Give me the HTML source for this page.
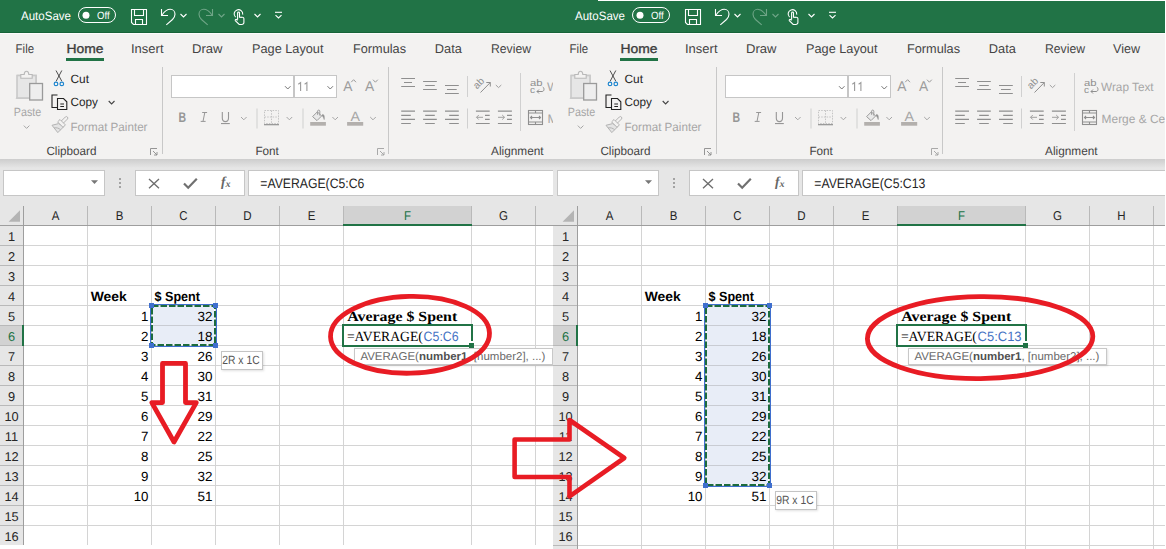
<!DOCTYPE html><html><head><meta charset="utf-8"><title>Excel AVERAGE</title><style>html,body{margin:0;padding:0;background:#fff;overflow:hidden;width:1166px;height:549px}svg{display:block}</style></head><body><svg width="1166" height="549" viewBox="0 0 1166 549" text-rendering="geometricPrecision"><defs><linearGradient id="shadow" x1="0" y1="0" x2="0" y2="1"><stop offset="0" stop-color="#cdcdcd"/><stop offset="1" stop-color="#e6e6e6"/></linearGradient><filter id="tipsh" x="-10%" y="-20%" width="130%" height="160%"><feDropShadow dx="1" dy="1" stdDeviation="0.8" flood-color="#000" flood-opacity="0.12"/></filter><clipPath id="clipL"><rect x="0" y="0" width="553" height="545"/></clipPath><clipPath id="clipR"><rect x="-1" y="1" width="612" height="548"/></clipPath></defs><rect x="0" y="0" width="1166" height="549" fill="#fff"/><g clip-path="url(#clipL)"><rect x="-1" y="0" width="554" height="33" fill="#217346"/><rect x="-1" y="32" width="554" height="1" fill="#176338"/><text x="21" y="19.8" font-family="'Liberation Sans', sans-serif" font-size="12.2" font-weight="400" fill="#fff" textLength="50" lengthAdjust="spacingAndGlyphs" >AutoSave</text><rect x="78.5" y="7.5" width="37" height="15" rx="7.5" fill="none" stroke="#fff" stroke-width="1"/><circle cx="86" cy="15.2" r="3.5" fill="#fff"/><text x="97" y="19" font-family="'Liberation Sans', sans-serif" font-size="10.5" font-weight="400" fill="#fff" textLength="12.6" lengthAdjust="spacingAndGlyphs" >Off</text><g fill="none" stroke="#fff" stroke-width="1.1"><path d="M131.5,9.5 H146.5 V24.5 H133.5 L131.5,22.5 Z"/><path d="M134.5,9.5 V15.5 H143.5 V9.5"/><path d="M135.5,24.5 V19.5 H142.5 V24.5"/></g><g fill="none" stroke="#fff" stroke-width="1.1"><path d="M161.5,9 V15.5 H168"/><path d="M162,15 C164.5,11.5 167.5,9.3 170.3,9.3 C173,9.3 175,11.5 175,14.3 C175,16.5 174,18 172.5,19.5 L166.3,24.8"/></g><path d="M180.5,14 L183.5,17 L186.5,14" fill="none" stroke="#fff" stroke-width="1.1"/><g fill="none" stroke="#6fa587" stroke-width="1.1"><path d="M212.5,9 V15.5 H206"/><path d="M212,15 C209.5,11.5 206.5,9.3 203.7,9.3 C201,9.3 199,11.5 199,14.3 C199,16.5 200,18 201.5,19.5 L207.7,24.8"/></g><path d="M218.5,14 L221.5,17 L224.5,14" fill="none" stroke="#6fa587" stroke-width="1.1"/><g fill="none" stroke="#fff" stroke-width="1.1"><path d="M235.6,17.2 A4.3,4.3 0 1 1 242.7,14.6"/><path d="M237.6,19.6 V12.9 A0.95,0.95 0 0 1 239.5,12.9 V17.2 H242.3 A1.6,1.6 0 0 1 243.9,18.8 V22.4 A2.1,2.1 0 0 1 241.8,24.5 H239.2 L235.3,20.6 A0.85,0.85 0 0 1 236.5,19.5 L237.6,20.4"/><path d="M240.2,17.4 H242" stroke-width="0.7"/></g><path d="M254.5,14 L257.5,17 L260.5,14" fill="none" stroke="#fff" stroke-width="1.1"/><g fill="none" stroke="#fff" stroke-width="1.1"><path d="M275,12.3 H282"/><path d="M275.5,15.2 L278.5,18 L281.5,15.2"/></g><rect x="-1" y="33" width="554" height="126" fill="#f3f2f1"/><rect x="-1" y="33" width="554" height="1" fill="#fcfbfb"/><text x="15.6" y="52.7" font-family="'Liberation Sans', sans-serif" font-size="12.8" font-weight="400" fill="#444" textLength="18.5" lengthAdjust="spacingAndGlyphs" >File</text><text x="66.5" y="52.7" font-family="'Liberation Sans', sans-serif" font-size="12.8" font-weight="400" fill="#3c3c3c" textLength="37" lengthAdjust="spacingAndGlyphs" stroke="#3c3c3c" stroke-width="0.35">Home</text><rect x="66" y="58" width="38" height="3" fill="#217346"/><text x="131" y="52.7" font-family="'Liberation Sans', sans-serif" font-size="12.8" font-weight="400" fill="#444" textLength="32.5" lengthAdjust="spacingAndGlyphs" >Insert</text><text x="192" y="52.7" font-family="'Liberation Sans', sans-serif" font-size="12.8" font-weight="400" fill="#444" textLength="30.5" lengthAdjust="spacingAndGlyphs" >Draw</text><text x="252" y="52.7" font-family="'Liberation Sans', sans-serif" font-size="12.8" font-weight="400" fill="#444" textLength="71.5" lengthAdjust="spacingAndGlyphs" >Page Layout</text><text x="353" y="52.7" font-family="'Liberation Sans', sans-serif" font-size="12.8" font-weight="400" fill="#444" textLength="53" lengthAdjust="spacingAndGlyphs" >Formulas</text><text x="434.8" y="52.7" font-family="'Liberation Sans', sans-serif" font-size="12.8" font-weight="400" fill="#444" textLength="27" lengthAdjust="spacingAndGlyphs" >Data</text><text x="491" y="52.7" font-family="'Liberation Sans', sans-serif" font-size="12.8" font-weight="400" fill="#444" textLength="40" lengthAdjust="spacingAndGlyphs" >Review</text><path d="M17,75.5 H21 M32,75.5 H36 V98 H17 Z" fill="#e6e6e6" stroke="#c9c9c9" stroke-width="1.6"/><rect x="17" y="75.5" width="19" height="22.5" fill="#e6e6e6" stroke="#c9c9c9" stroke-width="1.6"/><path d="M20.8,78.2 V74.5 H24.2 C24.2,72.3 25.2,71.2 26.5,71.2 C27.8,71.2 28.8,72.3 28.8,74.5 H32.2 V78.2 Z" fill="#f3f2f1" stroke="#b9b9b9" stroke-width="1.1"/><rect x="29.7" y="83.5" width="12.8" height="16.5" fill="#eeeeee" stroke="#9a9a9a" stroke-width="1.3"/><text x="13.8" y="115.7" font-family="'Liberation Sans', sans-serif" font-size="12" font-weight="400" fill="#a6a6a6" textLength="27.4" lengthAdjust="spacingAndGlyphs" >Paste</text><path d="M23.8,125.6 L26.6,128.4 L29.4,125.6" fill="none" stroke="#a6a6a6" stroke-width="1"/><g fill="none" stroke="#3a3a3a" stroke-width="0.9"><path d="M56,70.5 L61.8,81.2"/><path d="M61.8,70.5 L56.2,81.2"/></g><g fill="none" stroke="#1e86cf" stroke-width="1.2"><circle cx="56" cy="83.9" r="1.8"/><circle cx="61.8" cy="83.9" r="1.8"/></g><text x="70.5" y="82.8" font-family="'Liberation Sans', sans-serif" font-size="12" font-weight="400" fill="#262626" textLength="18.5" lengthAdjust="spacingAndGlyphs" >Cut</text><g fill="none" stroke="#222" stroke-width="1.1"><path d="M57.5,95 H52 V107.5 H57"/><path d="M57.5,98.5 H63.5 L66.8,101.8 V109.5 H57.5 Z"/><path d="M60.3,104 H64 M60.3,106.5 H64"/></g><text x="70.5" y="106.4" font-family="'Liberation Sans', sans-serif" font-size="12" font-weight="400" fill="#262626" textLength="27.4" lengthAdjust="spacingAndGlyphs" >Copy</text><path d="M108.7,101 L111.60000000000001,103.9 L114.5,101" fill="none" stroke="#444" stroke-width="1.1"/><g fill="none" stroke="#b3b3b3" stroke-width="1" stroke-linejoin="round"><path d="M58.6,123.6 L52,125.3 L57.8,132.6 L63.8,126.6 Z" fill="#e4e4e4"/><path d="M54,128 C56.5,127.3 59,128.2 60.6,129.8"/><path d="M57.6,121.9 L60,119.5 L65.4,124.9 L63,127.3 Z" fill="#f3f2f1"/><path d="M61.3,121 L65.3,117 A1.4,1.4 0 0 1 67.4,119.1 L63.4,123.1"/></g><text x="70.5" y="130.6" font-family="'Liberation Sans', sans-serif" font-size="12" font-weight="400" fill="#a6a6a6" textLength="77" lengthAdjust="spacingAndGlyphs" >Format Painter</text><text x="46.4" y="155.2" font-family="'Liberation Sans', sans-serif" font-size="12" font-weight="400" fill="#444" textLength="50" lengthAdjust="spacingAndGlyphs" >Clipboard</text><g fill="none" stroke="#8a8a8a" stroke-width="0.9"><path d="M150.5,155 V148.5 H157"/><path d="M153,151 L157,155 M157,152 V155 H154"/></g><rect x="162" y="67" width="1" height="87" fill="#c8c8c8"/><rect x="171.5" y="75.5" width="122" height="22" fill="#fff" stroke="#c6c6c6" stroke-width="1"/><rect x="294.5" y="75.5" width="42" height="22" fill="#fff" stroke="#c6c6c6" stroke-width="1"/><path d="M285,86.2 L287.75,89.0 L290.5,86.2" fill="none" stroke="#777" stroke-width="1"/><path d="M327.5,86.2 L330.25,89.0 L333.0,86.2" fill="none" stroke="#777" stroke-width="1"/><path d="M298.3,84.2 L300.6,82.6 V91 M304.6,84.2 L306.9,82.6 V91" fill="none" stroke="#9a9a9a" stroke-width="1.1"/><text x="343.2" y="90.9" font-family="'Liberation Sans', sans-serif" font-size="14.2" font-weight="400" fill="#9c9c9c" textLength="9.2" lengthAdjust="spacingAndGlyphs" >A</text><path d="M351.2,82.2 L353.6,79.7 L356,82.2" fill="none" stroke="#9a9a9a" stroke-width="1"/><text x="364.9" y="90.9" font-family="'Liberation Sans', sans-serif" font-size="14.2" font-weight="400" fill="#9c9c9c" textLength="9.2" lengthAdjust="spacingAndGlyphs" >A</text><path d="M373,79.7 L375.4,82.2 L377.8,79.7" fill="none" stroke="#9a9a9a" stroke-width="1"/><text x="178.6" y="122" font-family="'Liberation Sans', sans-serif" font-size="14" font-weight="700" fill="#969696" textLength="7.6" lengthAdjust="spacingAndGlyphs" >B</text><g fill="none" stroke="#969696" stroke-width="1"><path d="M202.2,112.5 H207.1 M200.7,121.4 H205.6 M204.8,112.5 L203,121.4"/></g><path d="M222.3,112 V118 C222.3,120.3 223.6,121.6 225.4,121.6 C227.2,121.6 228.5,120.3 228.5,118 V112" fill="none" stroke="#969696" stroke-width="1.1"/><rect x="221" y="123" width="8.8" height="1.1" fill="#969696"/><path d="M241,117 L243.8,119.8 L246.6,117" fill="none" stroke="#a6a6a6" stroke-width="1"/><rect x="256.5" y="108.5" width="1" height="20" fill="#d0d0d0"/><g fill="none" stroke="#c4c4c4" stroke-width="1" stroke-dasharray="1.5,1.2"><rect x="264.5" y="110.5" width="14" height="13"/><path d="M271.5,110.5 V123.5 M264.5,117 H278.5"/></g><rect x="264" y="124" width="15" height="1.3" fill="#9a9a9a"/><path d="M286.6,117 L289.40000000000003,119.8 L292.20000000000005,117" fill="none" stroke="#a6a6a6" stroke-width="1"/><rect x="302.5" y="108.5" width="1" height="20" fill="#d0d0d0"/><g stroke="#9c9c9c" stroke-width="1" stroke-linejoin="round"><path d="M312.6,116.6 L317.4,111.8 L321.6,116 L317,120.6 Z" fill="#e9e9e9"/><path d="M317.6,114.8 V111.2 A1.1,1.1 0 0 1 319.8,111.2 V115.6" fill="none"/><path d="M321.8,115.2 C322.8,113.6 325,114.6 324.2,119.6 C323.6,117.6 322.9,116.4 321.8,115.2 Z" fill="#8c8c8c" stroke-width="0.6"/></g><rect x="310.2" y="122" width="15.7" height="3.7" fill="#b3b0ad"/><path d="M332.4,117 L335.2,119.8 L338.0,117" fill="none" stroke="#a6a6a6" stroke-width="1"/><text x="350.5" y="120.5" font-family="'Liberation Sans', sans-serif" font-size="13.5" font-weight="400" fill="#a6a6a6" textLength="9.5" lengthAdjust="spacingAndGlyphs" >A</text><rect x="347.1" y="122" width="16.1" height="3.7" fill="#b3b0ad"/><path d="M370.2,117 L373.0,119.8 L375.8,117" fill="none" stroke="#a6a6a6" stroke-width="1"/><text x="255.4" y="155.2" font-family="'Liberation Sans', sans-serif" font-size="12" font-weight="400" fill="#444" textLength="23.5" lengthAdjust="spacingAndGlyphs" >Font</text><g fill="none" stroke="#a0a0a0" stroke-width="0.9"><path d="M377.5,155 V148.5 H384"/><path d="M380,151 L384,155 M384,152 V155 H381"/></g><rect x="388" y="67" width="1" height="87" fill="#c8c8c8"/><g fill="none" stroke="#8f8f8f" stroke-width="1.2"><path d="M401.2,78.5 H415 M404,82.5 H412 M401.2,86.5 H415 M423.1,81.5 H436.8 M425.2,85.5 H434.8 M423.1,89.5 H436.8 M445,85.5 H458.8 M447,89.5 H456.7 M445,93.5 H458.8 M401.2,111.2 H415 M401.2,115.3 H410.8 M401.2,119.4 H415 M401.2,123.5 H410.8 M423.1,111.2 H436.8 M425.2,115.3 H434.8 M423.1,119.4 H436.8 M425.2,123.5 H434.8 M445,111.2 H458.8 M449.2,115.3 H458.8 M445,119.4 H458.8 M449.2,123.5 H458.8 M475.9,111.2 H489.7 M485,115.3 H489.7 M485,119.4 H489.7 M475.9,123.5 H489.7 M497.9,111.2 H511.9 M507,115.3 H511.9 M507,119.4 H511.9 M497.9,123.5 H511.9 "/></g><g fill="none" stroke="#a0a0a0" stroke-width="1"><path d="M476.5,117.3 H483 M478.8,115 L476.5,117.3 L478.8,119.6"/><path d="M498,117.3 H504.5 M502.2,115 L504.5,117.3 L502.2,119.6"/></g><rect x="467" y="76" width="1" height="21" fill="#d0d0d0"/><rect x="467" y="108.5" width="1" height="20" fill="#d0d0d0"/><text x="0" y="0" font-family="'Liberation Sans', sans-serif" font-size="10" fill="#8f8f8f" transform="translate(477,89.5) rotate(-45)">ab</text><g fill="none" stroke="#8f8f8f" stroke-width="1"><path d="M480.5,92.5 L490.3,82.5 M486.3,82.5 H490.3 V86.5"/></g><path d="M495.8,85 L498.55,87.6 L501.3,85" fill="none" stroke="#a0a0a0" stroke-width="1"/><rect x="520" y="73" width="1" height="58" fill="#d0d0d0"/><text x="530" y="85.8" font-family="'Liberation Sans', sans-serif" font-size="9.5" font-weight="400" fill="#8f8f8f" textLength="12.5" lengthAdjust="spacingAndGlyphs" >ab</text><text x="530" y="93.3" font-family="'Liberation Sans', sans-serif" font-size="9.5" font-weight="400" fill="#8f8f8f" textLength="5" lengthAdjust="spacingAndGlyphs" >c</text><g fill="none" stroke="#8f8f8f" stroke-width="1"><path d="M542.8,87 C544.5,88 544.5,91.5 542,91.5 H537 M539,89.5 L537,91.5 L539,93.5"/></g><g fill="none" stroke="#8f8f8f" stroke-width="1.1"><rect x="528.5" y="110.5" width="14" height="14"/><path d="M528.5,113 H542.5 M528.5,122 H542.5 M535.5,110.5 V113 M535.5,122 V124.5"/><path d="M530.5,117.5 H540.5 M532,116 L530.5,117.5 L532,119 M539,116 L540.5,117.5 L539,119"/></g><text x="547" y="91.2" font-family="'Liberation Sans', sans-serif" font-size="12.5" font-weight="400" fill="#a6a6a6" >W</text><text x="547.5" y="122.5" font-family="'Liberation Sans', sans-serif" font-size="12.5" font-weight="400" fill="#a6a6a6" >M</text><text x="491" y="155.2" font-family="'Liberation Sans', sans-serif" font-size="12" font-weight="400" fill="#444" textLength="52.6" lengthAdjust="spacingAndGlyphs" >Alignment</text><rect x="-1" y="159" width="554" height="47" fill="#e6e6e6"/><rect x="-1" y="159" width="554" height="9" fill="url(#shadow)"/><rect x="3.5" y="170.5" width="101" height="25" fill="#fff" stroke="#c6c6c6" stroke-width="1"/><path d="M91,180.2 H98 L94.5,184 Z" fill="#777"/><g fill="#a3a3a3"><rect x="119" y="178" width="2" height="2"/><rect x="119" y="182" width="2" height="2"/><rect x="119" y="186" width="2" height="2"/></g><rect x="135.5" y="170.5" width="109" height="25" fill="#fff" stroke="#c6c6c6" stroke-width="1"/><path d="M149,179 L159,188.3 M159,179 L149,188.3" stroke="#6e6e6e" stroke-width="1.35" fill="none"/><path d="M184,183.5 L188.2,187.7 L196.8,178.8" stroke="#707070" stroke-width="2.2" fill="none"/><text x="221" y="186.4" font-family="'Liberation Serif', serif" font-size="13.5" font-style="italic" font-weight="700" fill="#666">f</text><text x="225.6" y="186.8" font-family="'Liberation Serif', serif" font-size="10" font-style="italic" font-weight="700" fill="#666">x</text><rect x="248.5" y="170.5" width="305" height="25" fill="#fff" stroke="#c6c6c6" stroke-width="1"/><text x="260.3" y="188" font-family="'Liberation Sans', sans-serif" font-size="13.7" font-weight="400" fill="#262626" textLength="104" lengthAdjust="spacingAndGlyphs" >=AVERAGE(C5:C6</text><rect x="-1" y="206" width="554" height="20" fill="#e6e6e6"/><rect x="24" y="226" width="553" height="319" fill="#fff"/><rect x="-1" y="226" width="24" height="319" fill="#e6e6e6"/><path d="M20,221.8 V210.2 L8.6,221.8 Z" fill="#b4b4b4"/><rect x="344" y="206" width="127" height="19" fill="#d2d2d2"/><rect x="87" y="206" width="1" height="19" fill="#b9b9b9"/><rect x="151" y="206" width="1" height="19" fill="#b9b9b9"/><rect x="215" y="206" width="1" height="19" fill="#b9b9b9"/><rect x="279" y="206" width="1" height="19" fill="#b9b9b9"/><rect x="343" y="206" width="1" height="19" fill="#b9b9b9"/><rect x="471" y="206" width="1" height="19" fill="#b9b9b9"/><rect x="535" y="206" width="1" height="19" fill="#b9b9b9"/><rect x="599" y="206" width="1" height="19" fill="#b9b9b9"/><rect x="663" y="206" width="1" height="19" fill="#b9b9b9"/><rect x="23" y="206" width="1" height="19" fill="#b9b9b9"/><rect x="87" y="226" width="1" height="319" fill="#d4d4d4"/><rect x="151" y="226" width="1" height="319" fill="#d4d4d4"/><rect x="215" y="226" width="1" height="319" fill="#d4d4d4"/><rect x="279" y="226" width="1" height="319" fill="#d4d4d4"/><rect x="343" y="226" width="1" height="319" fill="#d4d4d4"/><rect x="471" y="226" width="1" height="319" fill="#d4d4d4"/><rect x="535" y="226" width="1" height="319" fill="#d4d4d4"/><rect x="599" y="226" width="1" height="319" fill="#d4d4d4"/><rect x="663" y="226" width="1" height="319" fill="#d4d4d4"/><rect x="24" y="245" width="553" height="1" fill="#d4d4d4"/><rect x="-1" y="245" width="24" height="1" fill="#b9b9b9"/><rect x="24" y="265" width="553" height="1" fill="#d4d4d4"/><rect x="-1" y="265" width="24" height="1" fill="#b9b9b9"/><rect x="24" y="285" width="553" height="1" fill="#d4d4d4"/><rect x="-1" y="285" width="24" height="1" fill="#b9b9b9"/><rect x="24" y="305" width="553" height="1" fill="#d4d4d4"/><rect x="-1" y="305" width="24" height="1" fill="#b9b9b9"/><rect x="24" y="325" width="553" height="1" fill="#d4d4d4"/><rect x="-1" y="325" width="24" height="1" fill="#b9b9b9"/><rect x="24" y="345" width="553" height="1" fill="#d4d4d4"/><rect x="-1" y="345" width="24" height="1" fill="#b9b9b9"/><rect x="24" y="365" width="553" height="1" fill="#d4d4d4"/><rect x="-1" y="365" width="24" height="1" fill="#b9b9b9"/><rect x="24" y="385" width="553" height="1" fill="#d4d4d4"/><rect x="-1" y="385" width="24" height="1" fill="#b9b9b9"/><rect x="24" y="405" width="553" height="1" fill="#d4d4d4"/><rect x="-1" y="405" width="24" height="1" fill="#b9b9b9"/><rect x="24" y="425" width="553" height="1" fill="#d4d4d4"/><rect x="-1" y="425" width="24" height="1" fill="#b9b9b9"/><rect x="24" y="445" width="553" height="1" fill="#d4d4d4"/><rect x="-1" y="445" width="24" height="1" fill="#b9b9b9"/><rect x="24" y="465" width="553" height="1" fill="#d4d4d4"/><rect x="-1" y="465" width="24" height="1" fill="#b9b9b9"/><rect x="24" y="485" width="553" height="1" fill="#d4d4d4"/><rect x="-1" y="485" width="24" height="1" fill="#b9b9b9"/><rect x="24" y="505" width="553" height="1" fill="#d4d4d4"/><rect x="-1" y="505" width="24" height="1" fill="#b9b9b9"/><rect x="24" y="525" width="553" height="1" fill="#d4d4d4"/><rect x="-1" y="525" width="24" height="1" fill="#b9b9b9"/><rect x="-1" y="225" width="554" height="1" fill="#9e9e9e"/><rect x="23" y="206" width="1" height="339" fill="#9e9e9e"/><rect x="343" y="224" width="129" height="2" fill="#217346"/><text x="55.5" y="219.8" font-family="'Liberation Sans', sans-serif" font-size="12.8" font-weight="400" fill="#262626" textLength="7.68" lengthAdjust="spacingAndGlyphs" text-anchor="middle" >A</text><text x="119.5" y="219.8" font-family="'Liberation Sans', sans-serif" font-size="12.8" font-weight="400" fill="#262626" textLength="7.68" lengthAdjust="spacingAndGlyphs" text-anchor="middle" >B</text><text x="183.5" y="219.8" font-family="'Liberation Sans', sans-serif" font-size="12.8" font-weight="400" fill="#262626" textLength="8.32" lengthAdjust="spacingAndGlyphs" text-anchor="middle" >C</text><text x="247.5" y="219.8" font-family="'Liberation Sans', sans-serif" font-size="12.8" font-weight="400" fill="#262626" textLength="8.32" lengthAdjust="spacingAndGlyphs" text-anchor="middle" >D</text><text x="311.5" y="219.8" font-family="'Liberation Sans', sans-serif" font-size="12.8" font-weight="400" fill="#262626" textLength="7.68" lengthAdjust="spacingAndGlyphs" text-anchor="middle" >E</text><text x="407.5" y="219.8" font-family="'Liberation Sans', sans-serif" font-size="12.8" font-weight="400" fill="#217346" textLength="7.04" lengthAdjust="spacingAndGlyphs" text-anchor="middle" >F</text><text x="503.5" y="219.8" font-family="'Liberation Sans', sans-serif" font-size="12.8" font-weight="400" fill="#262626" textLength="8.96" lengthAdjust="spacingAndGlyphs" text-anchor="middle" >G</text><text x="567.5" y="219.8" font-family="'Liberation Sans', sans-serif" font-size="12.8" font-weight="400" fill="#262626" textLength="8.32" lengthAdjust="spacingAndGlyphs" text-anchor="middle" >H</text><text x="631.5" y="219.8" font-family="'Liberation Sans', sans-serif" font-size="12.8" font-weight="400" fill="#262626" textLength="3.2" lengthAdjust="spacingAndGlyphs" text-anchor="middle" >I</text><rect x="-1" y="326" width="24" height="19" fill="#d2d2d2"/><rect x="22" y="325" width="2" height="21" fill="#217346"/><text x="11.5" y="240.7" font-family="'Liberation Sans', sans-serif" font-size="12.8" font-weight="400" fill="#262626" text-anchor="middle" >1</text><text x="11.5" y="260.7" font-family="'Liberation Sans', sans-serif" font-size="12.8" font-weight="400" fill="#262626" text-anchor="middle" >2</text><text x="11.5" y="280.7" font-family="'Liberation Sans', sans-serif" font-size="12.8" font-weight="400" fill="#262626" text-anchor="middle" >3</text><text x="11.5" y="300.7" font-family="'Liberation Sans', sans-serif" font-size="12.8" font-weight="400" fill="#262626" text-anchor="middle" >4</text><text x="11.5" y="320.7" font-family="'Liberation Sans', sans-serif" font-size="12.8" font-weight="400" fill="#262626" text-anchor="middle" >5</text><text x="11.5" y="340.7" font-family="'Liberation Sans', sans-serif" font-size="12.8" font-weight="400" fill="#217346" text-anchor="middle" >6</text><text x="11.5" y="360.7" font-family="'Liberation Sans', sans-serif" font-size="12.8" font-weight="400" fill="#262626" text-anchor="middle" >7</text><text x="11.5" y="380.7" font-family="'Liberation Sans', sans-serif" font-size="12.8" font-weight="400" fill="#262626" text-anchor="middle" >8</text><text x="11.5" y="400.7" font-family="'Liberation Sans', sans-serif" font-size="12.8" font-weight="400" fill="#262626" text-anchor="middle" >9</text><text x="11.5" y="420.7" font-family="'Liberation Sans', sans-serif" font-size="12.8" font-weight="400" fill="#262626" text-anchor="middle" >10</text><text x="11.5" y="440.7" font-family="'Liberation Sans', sans-serif" font-size="12.8" font-weight="400" fill="#262626" text-anchor="middle" >11</text><text x="11.5" y="460.7" font-family="'Liberation Sans', sans-serif" font-size="12.8" font-weight="400" fill="#262626" text-anchor="middle" >12</text><text x="11.5" y="480.7" font-family="'Liberation Sans', sans-serif" font-size="12.8" font-weight="400" fill="#262626" text-anchor="middle" >13</text><text x="11.5" y="500.7" font-family="'Liberation Sans', sans-serif" font-size="12.8" font-weight="400" fill="#262626" text-anchor="middle" >14</text><text x="11.5" y="520.7" font-family="'Liberation Sans', sans-serif" font-size="12.8" font-weight="400" fill="#262626" text-anchor="middle" >15</text><text x="11.5" y="540.7" font-family="'Liberation Sans', sans-serif" font-size="12.8" font-weight="400" fill="#262626" text-anchor="middle" >16</text><rect x="153" y="306" width="61" height="38" fill="#e8edf7"/><rect x="153" y="325" width="61" height="1" fill="#c9ccd3"/><text x="90.7" y="300.8" font-family="'Liberation Sans', sans-serif" font-size="13.3" font-weight="700" fill="#000" textLength="36" lengthAdjust="spacingAndGlyphs" >Week</text><text x="154.5" y="300.8" font-family="'Liberation Sans', sans-serif" font-size="13.3" font-weight="700" fill="#000" textLength="45.5" lengthAdjust="spacingAndGlyphs" >$ Spent</text><text x="148.5" y="320.5" font-family="'Liberation Sans', sans-serif" font-size="13.3" font-weight="400" fill="#000" text-anchor="end" >1</text><text x="212.5" y="320.5" font-family="'Liberation Sans', sans-serif" font-size="13.3" font-weight="400" fill="#000" textLength="15" lengthAdjust="spacingAndGlyphs" text-anchor="end" >32</text><text x="148.5" y="340.5" font-family="'Liberation Sans', sans-serif" font-size="13.3" font-weight="400" fill="#000" text-anchor="end" >2</text><text x="212.5" y="340.5" font-family="'Liberation Sans', sans-serif" font-size="13.3" font-weight="400" fill="#000" textLength="15" lengthAdjust="spacingAndGlyphs" text-anchor="end" >18</text><text x="148.5" y="360.5" font-family="'Liberation Sans', sans-serif" font-size="13.3" font-weight="400" fill="#000" text-anchor="end" >3</text><text x="212.5" y="360.5" font-family="'Liberation Sans', sans-serif" font-size="13.3" font-weight="400" fill="#000" textLength="15" lengthAdjust="spacingAndGlyphs" text-anchor="end" >26</text><text x="148.5" y="380.5" font-family="'Liberation Sans', sans-serif" font-size="13.3" font-weight="400" fill="#000" text-anchor="end" >4</text><text x="212.5" y="380.5" font-family="'Liberation Sans', sans-serif" font-size="13.3" font-weight="400" fill="#000" textLength="15" lengthAdjust="spacingAndGlyphs" text-anchor="end" >30</text><text x="148.5" y="400.5" font-family="'Liberation Sans', sans-serif" font-size="13.3" font-weight="400" fill="#000" text-anchor="end" >5</text><text x="212.5" y="400.5" font-family="'Liberation Sans', sans-serif" font-size="13.3" font-weight="400" fill="#000" textLength="15" lengthAdjust="spacingAndGlyphs" text-anchor="end" >31</text><text x="148.5" y="420.5" font-family="'Liberation Sans', sans-serif" font-size="13.3" font-weight="400" fill="#000" text-anchor="end" >6</text><text x="212.5" y="420.5" font-family="'Liberation Sans', sans-serif" font-size="13.3" font-weight="400" fill="#000" textLength="15" lengthAdjust="spacingAndGlyphs" text-anchor="end" >29</text><text x="148.5" y="440.5" font-family="'Liberation Sans', sans-serif" font-size="13.3" font-weight="400" fill="#000" text-anchor="end" >7</text><text x="212.5" y="440.5" font-family="'Liberation Sans', sans-serif" font-size="13.3" font-weight="400" fill="#000" textLength="15" lengthAdjust="spacingAndGlyphs" text-anchor="end" >22</text><text x="148.5" y="460.5" font-family="'Liberation Sans', sans-serif" font-size="13.3" font-weight="400" fill="#000" text-anchor="end" >8</text><text x="212.5" y="460.5" font-family="'Liberation Sans', sans-serif" font-size="13.3" font-weight="400" fill="#000" textLength="15" lengthAdjust="spacingAndGlyphs" text-anchor="end" >25</text><text x="148.5" y="480.5" font-family="'Liberation Sans', sans-serif" font-size="13.3" font-weight="400" fill="#000" text-anchor="end" >9</text><text x="212.5" y="480.5" font-family="'Liberation Sans', sans-serif" font-size="13.3" font-weight="400" fill="#000" textLength="15" lengthAdjust="spacingAndGlyphs" text-anchor="end" >32</text><text x="148.5" y="500.5" font-family="'Liberation Sans', sans-serif" font-size="13.3" font-weight="400" fill="#000" text-anchor="end" >10</text><text x="212.5" y="500.5" font-family="'Liberation Sans', sans-serif" font-size="13.3" font-weight="400" fill="#000" textLength="15" lengthAdjust="spacingAndGlyphs" text-anchor="end" >51</text><rect x="150.5" y="304.5" width="66" height="42" fill="none" stroke="#3f6fce" stroke-width="1"/><rect x="152" y="306" width="63" height="39" fill="none" stroke="#1d6b3c" stroke-width="2" stroke-dasharray="6.5,2"/><rect x="149" y="303" width="5" height="5" fill="#3f6fce"/><rect x="149" y="343" width="5" height="5" fill="#3f6fce"/><rect x="213" y="303" width="5" height="5" fill="#3f6fce"/><rect x="213" y="343" width="5" height="5" fill="#3f6fce"/><text x="347.2" y="320.6" font-family="'Liberation Serif', serif" font-size="14" font-weight="700" fill="#000" textLength="110" lengthAdjust="spacingAndGlyphs" >Average $ Spent</text><rect x="343" y="325" width="129" height="21" fill="#fff" stroke="#217346" stroke-width="2"/><rect x="469" y="343" width="5" height="5" fill="#217346"/><rect x="470" y="341" width="3" height="2" fill="#fff"/><text x="346.9" y="340.5" font-family="'Liberation Serif', serif" font-size="14" font-weight="400" fill="#000" textLength="76" lengthAdjust="spacingAndGlyphs" >=AVERAGE(</text><text x="423.6" y="340.5" font-family="'Liberation Sans', sans-serif" font-size="13.5" font-weight="400" fill="#4472c4" textLength="35" lengthAdjust="spacingAndGlyphs" >C5:C6</text><rect x="354.5" y="348.5" width="198" height="16" fill="#fff" stroke="#c8c8c8" stroke-width="1" filter="url(#tipsh)"/><text x="360.4" y="359.8" font-family="'Liberation Sans', sans-serif" font-size="11.3" fill="#6a6a6a" textLength="185" lengthAdjust="spacingAndGlyphs">AVERAGE(<tspan font-weight="700" fill="#505050">number1</tspan>, [number2], ...)</text><rect x="221.5" y="351.5" width="41" height="18" fill="#fff" stroke="#c4c4c4" stroke-width="1" filter="url(#tipsh)"/><text x="222.3" y="364.3" font-family="'Liberation Sans', sans-serif" font-size="12" font-weight="400" fill="#555" textLength="37.3" lengthAdjust="spacingAndGlyphs" >2R x 1C</text></g><g transform="translate(554,0)"><g clip-path="url(#clipR)"><rect x="-1" y="0" width="612" height="33" fill="#217346"/><rect x="-1" y="32" width="612" height="1" fill="#176338"/><text x="21" y="19.8" font-family="'Liberation Sans', sans-serif" font-size="12.2" font-weight="400" fill="#fff" textLength="50" lengthAdjust="spacingAndGlyphs" >AutoSave</text><rect x="78.5" y="7.5" width="37" height="15" rx="7.5" fill="none" stroke="#fff" stroke-width="1"/><circle cx="86" cy="15.2" r="3.5" fill="#fff"/><text x="97" y="19" font-family="'Liberation Sans', sans-serif" font-size="10.5" font-weight="400" fill="#fff" textLength="12.6" lengthAdjust="spacingAndGlyphs" >Off</text><g fill="none" stroke="#fff" stroke-width="1.1"><path d="M131.5,9.5 H146.5 V24.5 H133.5 L131.5,22.5 Z"/><path d="M134.5,9.5 V15.5 H143.5 V9.5"/><path d="M135.5,24.5 V19.5 H142.5 V24.5"/></g><g fill="none" stroke="#fff" stroke-width="1.1"><path d="M161.5,9 V15.5 H168"/><path d="M162,15 C164.5,11.5 167.5,9.3 170.3,9.3 C173,9.3 175,11.5 175,14.3 C175,16.5 174,18 172.5,19.5 L166.3,24.8"/></g><path d="M180.5,14 L183.5,17 L186.5,14" fill="none" stroke="#fff" stroke-width="1.1"/><g fill="none" stroke="#6fa587" stroke-width="1.1"><path d="M212.5,9 V15.5 H206"/><path d="M212,15 C209.5,11.5 206.5,9.3 203.7,9.3 C201,9.3 199,11.5 199,14.3 C199,16.5 200,18 201.5,19.5 L207.7,24.8"/></g><path d="M218.5,14 L221.5,17 L224.5,14" fill="none" stroke="#6fa587" stroke-width="1.1"/><g fill="none" stroke="#fff" stroke-width="1.1"><path d="M235.6,17.2 A4.3,4.3 0 1 1 242.7,14.6"/><path d="M237.6,19.6 V12.9 A0.95,0.95 0 0 1 239.5,12.9 V17.2 H242.3 A1.6,1.6 0 0 1 243.9,18.8 V22.4 A2.1,2.1 0 0 1 241.8,24.5 H239.2 L235.3,20.6 A0.85,0.85 0 0 1 236.5,19.5 L237.6,20.4"/><path d="M240.2,17.4 H242" stroke-width="0.7"/></g><path d="M254.5,14 L257.5,17 L260.5,14" fill="none" stroke="#fff" stroke-width="1.1"/><g fill="none" stroke="#fff" stroke-width="1.1"><path d="M275,12.3 H282"/><path d="M275.5,15.2 L278.5,18 L281.5,15.2"/></g><rect x="-1" y="33" width="612" height="126" fill="#f3f2f1"/><rect x="-1" y="33" width="612" height="1" fill="#fcfbfb"/><text x="15.6" y="52.7" font-family="'Liberation Sans', sans-serif" font-size="12.8" font-weight="400" fill="#444" textLength="18.5" lengthAdjust="spacingAndGlyphs" >File</text><text x="66.5" y="52.7" font-family="'Liberation Sans', sans-serif" font-size="12.8" font-weight="400" fill="#3c3c3c" textLength="37" lengthAdjust="spacingAndGlyphs" stroke="#3c3c3c" stroke-width="0.35">Home</text><rect x="66" y="58" width="38" height="3" fill="#217346"/><text x="131" y="52.7" font-family="'Liberation Sans', sans-serif" font-size="12.8" font-weight="400" fill="#444" textLength="32.5" lengthAdjust="spacingAndGlyphs" >Insert</text><text x="192" y="52.7" font-family="'Liberation Sans', sans-serif" font-size="12.8" font-weight="400" fill="#444" textLength="30.5" lengthAdjust="spacingAndGlyphs" >Draw</text><text x="252" y="52.7" font-family="'Liberation Sans', sans-serif" font-size="12.8" font-weight="400" fill="#444" textLength="71.5" lengthAdjust="spacingAndGlyphs" >Page Layout</text><text x="353" y="52.7" font-family="'Liberation Sans', sans-serif" font-size="12.8" font-weight="400" fill="#444" textLength="53" lengthAdjust="spacingAndGlyphs" >Formulas</text><text x="434.8" y="52.7" font-family="'Liberation Sans', sans-serif" font-size="12.8" font-weight="400" fill="#444" textLength="27" lengthAdjust="spacingAndGlyphs" >Data</text><text x="491" y="52.7" font-family="'Liberation Sans', sans-serif" font-size="12.8" font-weight="400" fill="#444" textLength="40" lengthAdjust="spacingAndGlyphs" >Review</text><text x="559" y="52.7" font-family="'Liberation Sans', sans-serif" font-size="12.8" font-weight="400" fill="#444" textLength="27" lengthAdjust="spacingAndGlyphs" >View</text><path d="M17,75.5 H21 M32,75.5 H36 V98 H17 Z" fill="#e6e6e6" stroke="#c9c9c9" stroke-width="1.6"/><rect x="17" y="75.5" width="19" height="22.5" fill="#e6e6e6" stroke="#c9c9c9" stroke-width="1.6"/><path d="M20.8,78.2 V74.5 H24.2 C24.2,72.3 25.2,71.2 26.5,71.2 C27.8,71.2 28.8,72.3 28.8,74.5 H32.2 V78.2 Z" fill="#f3f2f1" stroke="#b9b9b9" stroke-width="1.1"/><rect x="29.7" y="83.5" width="12.8" height="16.5" fill="#eeeeee" stroke="#9a9a9a" stroke-width="1.3"/><text x="13.8" y="115.7" font-family="'Liberation Sans', sans-serif" font-size="12" font-weight="400" fill="#a6a6a6" textLength="27.4" lengthAdjust="spacingAndGlyphs" >Paste</text><path d="M23.8,125.6 L26.6,128.4 L29.4,125.6" fill="none" stroke="#a6a6a6" stroke-width="1"/><g fill="none" stroke="#3a3a3a" stroke-width="0.9"><path d="M56,70.5 L61.8,81.2"/><path d="M61.8,70.5 L56.2,81.2"/></g><g fill="none" stroke="#1e86cf" stroke-width="1.2"><circle cx="56" cy="83.9" r="1.8"/><circle cx="61.8" cy="83.9" r="1.8"/></g><text x="70.5" y="82.8" font-family="'Liberation Sans', sans-serif" font-size="12" font-weight="400" fill="#262626" textLength="18.5" lengthAdjust="spacingAndGlyphs" >Cut</text><g fill="none" stroke="#222" stroke-width="1.1"><path d="M57.5,95 H52 V107.5 H57"/><path d="M57.5,98.5 H63.5 L66.8,101.8 V109.5 H57.5 Z"/><path d="M60.3,104 H64 M60.3,106.5 H64"/></g><text x="70.5" y="106.4" font-family="'Liberation Sans', sans-serif" font-size="12" font-weight="400" fill="#262626" textLength="27.4" lengthAdjust="spacingAndGlyphs" >Copy</text><path d="M108.7,101 L111.60000000000001,103.9 L114.5,101" fill="none" stroke="#444" stroke-width="1.1"/><g fill="none" stroke="#b3b3b3" stroke-width="1" stroke-linejoin="round"><path d="M58.6,123.6 L52,125.3 L57.8,132.6 L63.8,126.6 Z" fill="#e4e4e4"/><path d="M54,128 C56.5,127.3 59,128.2 60.6,129.8"/><path d="M57.6,121.9 L60,119.5 L65.4,124.9 L63,127.3 Z" fill="#f3f2f1"/><path d="M61.3,121 L65.3,117 A1.4,1.4 0 0 1 67.4,119.1 L63.4,123.1"/></g><text x="70.5" y="130.6" font-family="'Liberation Sans', sans-serif" font-size="12" font-weight="400" fill="#a6a6a6" textLength="77" lengthAdjust="spacingAndGlyphs" >Format Painter</text><text x="46.4" y="155.2" font-family="'Liberation Sans', sans-serif" font-size="12" font-weight="400" fill="#444" textLength="50" lengthAdjust="spacingAndGlyphs" >Clipboard</text><g fill="none" stroke="#8a8a8a" stroke-width="0.9"><path d="M150.5,155 V148.5 H157"/><path d="M153,151 L157,155 M157,152 V155 H154"/></g><rect x="162" y="67" width="1" height="87" fill="#c8c8c8"/><rect x="171.5" y="75.5" width="122" height="22" fill="#fff" stroke="#c6c6c6" stroke-width="1"/><rect x="294.5" y="75.5" width="42" height="22" fill="#fff" stroke="#c6c6c6" stroke-width="1"/><path d="M285,86.2 L287.75,89.0 L290.5,86.2" fill="none" stroke="#777" stroke-width="1"/><path d="M327.5,86.2 L330.25,89.0 L333.0,86.2" fill="none" stroke="#777" stroke-width="1"/><path d="M298.3,84.2 L300.6,82.6 V91 M304.6,84.2 L306.9,82.6 V91" fill="none" stroke="#9a9a9a" stroke-width="1.1"/><text x="343.2" y="90.9" font-family="'Liberation Sans', sans-serif" font-size="14.2" font-weight="400" fill="#9c9c9c" textLength="9.2" lengthAdjust="spacingAndGlyphs" >A</text><path d="M351.2,82.2 L353.6,79.7 L356,82.2" fill="none" stroke="#9a9a9a" stroke-width="1"/><text x="364.9" y="90.9" font-family="'Liberation Sans', sans-serif" font-size="14.2" font-weight="400" fill="#9c9c9c" textLength="9.2" lengthAdjust="spacingAndGlyphs" >A</text><path d="M373,79.7 L375.4,82.2 L377.8,79.7" fill="none" stroke="#9a9a9a" stroke-width="1"/><text x="178.6" y="122" font-family="'Liberation Sans', sans-serif" font-size="14" font-weight="700" fill="#969696" textLength="7.6" lengthAdjust="spacingAndGlyphs" >B</text><g fill="none" stroke="#969696" stroke-width="1"><path d="M202.2,112.5 H207.1 M200.7,121.4 H205.6 M204.8,112.5 L203,121.4"/></g><path d="M222.3,112 V118 C222.3,120.3 223.6,121.6 225.4,121.6 C227.2,121.6 228.5,120.3 228.5,118 V112" fill="none" stroke="#969696" stroke-width="1.1"/><rect x="221" y="123" width="8.8" height="1.1" fill="#969696"/><path d="M241,117 L243.8,119.8 L246.6,117" fill="none" stroke="#a6a6a6" stroke-width="1"/><rect x="256.5" y="108.5" width="1" height="20" fill="#d0d0d0"/><g fill="none" stroke="#c4c4c4" stroke-width="1" stroke-dasharray="1.5,1.2"><rect x="264.5" y="110.5" width="14" height="13"/><path d="M271.5,110.5 V123.5 M264.5,117 H278.5"/></g><rect x="264" y="124" width="15" height="1.3" fill="#9a9a9a"/><path d="M286.6,117 L289.40000000000003,119.8 L292.20000000000005,117" fill="none" stroke="#a6a6a6" stroke-width="1"/><rect x="302.5" y="108.5" width="1" height="20" fill="#d0d0d0"/><g stroke="#9c9c9c" stroke-width="1" stroke-linejoin="round"><path d="M312.6,116.6 L317.4,111.8 L321.6,116 L317,120.6 Z" fill="#e9e9e9"/><path d="M317.6,114.8 V111.2 A1.1,1.1 0 0 1 319.8,111.2 V115.6" fill="none"/><path d="M321.8,115.2 C322.8,113.6 325,114.6 324.2,119.6 C323.6,117.6 322.9,116.4 321.8,115.2 Z" fill="#8c8c8c" stroke-width="0.6"/></g><rect x="310.2" y="122" width="15.7" height="3.7" fill="#b3b0ad"/><path d="M332.4,117 L335.2,119.8 L338.0,117" fill="none" stroke="#a6a6a6" stroke-width="1"/><text x="350.5" y="120.5" font-family="'Liberation Sans', sans-serif" font-size="13.5" font-weight="400" fill="#a6a6a6" textLength="9.5" lengthAdjust="spacingAndGlyphs" >A</text><rect x="347.1" y="122" width="16.1" height="3.7" fill="#b3b0ad"/><path d="M370.2,117 L373.0,119.8 L375.8,117" fill="none" stroke="#a6a6a6" stroke-width="1"/><text x="255.4" y="155.2" font-family="'Liberation Sans', sans-serif" font-size="12" font-weight="400" fill="#444" textLength="23.5" lengthAdjust="spacingAndGlyphs" >Font</text><g fill="none" stroke="#a0a0a0" stroke-width="0.9"><path d="M377.5,155 V148.5 H384"/><path d="M380,151 L384,155 M384,152 V155 H381"/></g><rect x="388" y="67" width="1" height="87" fill="#c8c8c8"/><g fill="none" stroke="#8f8f8f" stroke-width="1.2"><path d="M401.2,78.5 H415 M404,82.5 H412 M401.2,86.5 H415 M423.1,81.5 H436.8 M425.2,85.5 H434.8 M423.1,89.5 H436.8 M445,85.5 H458.8 M447,89.5 H456.7 M445,93.5 H458.8 M401.2,111.2 H415 M401.2,115.3 H410.8 M401.2,119.4 H415 M401.2,123.5 H410.8 M423.1,111.2 H436.8 M425.2,115.3 H434.8 M423.1,119.4 H436.8 M425.2,123.5 H434.8 M445,111.2 H458.8 M449.2,115.3 H458.8 M445,119.4 H458.8 M449.2,123.5 H458.8 M475.9,111.2 H489.7 M485,115.3 H489.7 M485,119.4 H489.7 M475.9,123.5 H489.7 M497.9,111.2 H511.9 M507,115.3 H511.9 M507,119.4 H511.9 M497.9,123.5 H511.9 "/></g><g fill="none" stroke="#a0a0a0" stroke-width="1"><path d="M476.5,117.3 H483 M478.8,115 L476.5,117.3 L478.8,119.6"/><path d="M498,117.3 H504.5 M502.2,115 L504.5,117.3 L502.2,119.6"/></g><rect x="467" y="76" width="1" height="21" fill="#d0d0d0"/><rect x="467" y="108.5" width="1" height="20" fill="#d0d0d0"/><text x="0" y="0" font-family="'Liberation Sans', sans-serif" font-size="10" fill="#8f8f8f" transform="translate(477,89.5) rotate(-45)">ab</text><g fill="none" stroke="#8f8f8f" stroke-width="1"><path d="M480.5,92.5 L490.3,82.5 M486.3,82.5 H490.3 V86.5"/></g><path d="M495.8,85 L498.55,87.6 L501.3,85" fill="none" stroke="#a0a0a0" stroke-width="1"/><rect x="520" y="73" width="1" height="58" fill="#d0d0d0"/><text x="530" y="85.8" font-family="'Liberation Sans', sans-serif" font-size="9.5" font-weight="400" fill="#8f8f8f" textLength="12.5" lengthAdjust="spacingAndGlyphs" >ab</text><text x="530" y="93.3" font-family="'Liberation Sans', sans-serif" font-size="9.5" font-weight="400" fill="#8f8f8f" textLength="5" lengthAdjust="spacingAndGlyphs" >c</text><g fill="none" stroke="#8f8f8f" stroke-width="1"><path d="M542.8,87 C544.5,88 544.5,91.5 542,91.5 H537 M539,89.5 L537,91.5 L539,93.5"/></g><g fill="none" stroke="#8f8f8f" stroke-width="1.1"><rect x="528.5" y="110.5" width="14" height="14"/><path d="M528.5,113 H542.5 M528.5,122 H542.5 M535.5,110.5 V113 M535.5,122 V124.5"/><path d="M530.5,117.5 H540.5 M532,116 L530.5,117.5 L532,119 M539,116 L540.5,117.5 L539,119"/></g><text x="547" y="91.2" font-family="'Liberation Sans', sans-serif" font-size="12" font-weight="400" fill="#a6a6a6" textLength="52.6" lengthAdjust="spacingAndGlyphs" >Wrap Text</text><text x="547.6" y="122.5" font-family="'Liberation Sans', sans-serif" font-size="12" font-weight="400" fill="#a6a6a6" textLength="84" lengthAdjust="spacingAndGlyphs" >Merge &amp; Center</text><text x="491" y="155.2" font-family="'Liberation Sans', sans-serif" font-size="12" font-weight="400" fill="#444" textLength="52.6" lengthAdjust="spacingAndGlyphs" >Alignment</text><rect x="-1" y="159" width="612" height="47" fill="#e6e6e6"/><rect x="-1" y="159" width="612" height="9" fill="url(#shadow)"/><rect x="3.5" y="170.5" width="101" height="25" fill="#fff" stroke="#c6c6c6" stroke-width="1"/><path d="M91,180.2 H98 L94.5,184 Z" fill="#777"/><g fill="#a3a3a3"><rect x="119" y="178" width="2" height="2"/><rect x="119" y="182" width="2" height="2"/><rect x="119" y="186" width="2" height="2"/></g><rect x="135.5" y="170.5" width="109" height="25" fill="#fff" stroke="#c6c6c6" stroke-width="1"/><path d="M149,179 L159,188.3 M159,179 L149,188.3" stroke="#6e6e6e" stroke-width="1.35" fill="none"/><path d="M184,183.5 L188.2,187.7 L196.8,178.8" stroke="#707070" stroke-width="2.2" fill="none"/><text x="221" y="186.4" font-family="'Liberation Serif', serif" font-size="13.5" font-style="italic" font-weight="700" fill="#666">f</text><text x="225.6" y="186.8" font-family="'Liberation Serif', serif" font-size="10" font-style="italic" font-weight="700" fill="#666">x</text><rect x="248.5" y="170.5" width="363" height="25" fill="#fff" stroke="#c6c6c6" stroke-width="1"/><text x="260.3" y="188" font-family="'Liberation Sans', sans-serif" font-size="13.7" font-weight="400" fill="#262626" textLength="111" lengthAdjust="spacingAndGlyphs" >=AVERAGE(C5:C13</text><rect x="-1" y="206" width="612" height="20" fill="#e6e6e6"/><rect x="24" y="226" width="611" height="323" fill="#fff"/><rect x="-1" y="226" width="24" height="323" fill="#e6e6e6"/><path d="M20,221.8 V210.2 L8.6,221.8 Z" fill="#b4b4b4"/><rect x="344" y="206" width="127" height="19" fill="#d2d2d2"/><rect x="87" y="206" width="1" height="19" fill="#b9b9b9"/><rect x="151" y="206" width="1" height="19" fill="#b9b9b9"/><rect x="215" y="206" width="1" height="19" fill="#b9b9b9"/><rect x="279" y="206" width="1" height="19" fill="#b9b9b9"/><rect x="343" y="206" width="1" height="19" fill="#b9b9b9"/><rect x="471" y="206" width="1" height="19" fill="#b9b9b9"/><rect x="535" y="206" width="1" height="19" fill="#b9b9b9"/><rect x="599" y="206" width="1" height="19" fill="#b9b9b9"/><rect x="663" y="206" width="1" height="19" fill="#b9b9b9"/><rect x="23" y="206" width="1" height="19" fill="#b9b9b9"/><rect x="87" y="226" width="1" height="323" fill="#d4d4d4"/><rect x="151" y="226" width="1" height="323" fill="#d4d4d4"/><rect x="215" y="226" width="1" height="323" fill="#d4d4d4"/><rect x="279" y="226" width="1" height="323" fill="#d4d4d4"/><rect x="343" y="226" width="1" height="323" fill="#d4d4d4"/><rect x="471" y="226" width="1" height="323" fill="#d4d4d4"/><rect x="535" y="226" width="1" height="323" fill="#d4d4d4"/><rect x="599" y="226" width="1" height="323" fill="#d4d4d4"/><rect x="663" y="226" width="1" height="323" fill="#d4d4d4"/><rect x="24" y="245" width="611" height="1" fill="#d4d4d4"/><rect x="-1" y="245" width="24" height="1" fill="#b9b9b9"/><rect x="24" y="265" width="611" height="1" fill="#d4d4d4"/><rect x="-1" y="265" width="24" height="1" fill="#b9b9b9"/><rect x="24" y="285" width="611" height="1" fill="#d4d4d4"/><rect x="-1" y="285" width="24" height="1" fill="#b9b9b9"/><rect x="24" y="305" width="611" height="1" fill="#d4d4d4"/><rect x="-1" y="305" width="24" height="1" fill="#b9b9b9"/><rect x="24" y="325" width="611" height="1" fill="#d4d4d4"/><rect x="-1" y="325" width="24" height="1" fill="#b9b9b9"/><rect x="24" y="345" width="611" height="1" fill="#d4d4d4"/><rect x="-1" y="345" width="24" height="1" fill="#b9b9b9"/><rect x="24" y="365" width="611" height="1" fill="#d4d4d4"/><rect x="-1" y="365" width="24" height="1" fill="#b9b9b9"/><rect x="24" y="385" width="611" height="1" fill="#d4d4d4"/><rect x="-1" y="385" width="24" height="1" fill="#b9b9b9"/><rect x="24" y="405" width="611" height="1" fill="#d4d4d4"/><rect x="-1" y="405" width="24" height="1" fill="#b9b9b9"/><rect x="24" y="425" width="611" height="1" fill="#d4d4d4"/><rect x="-1" y="425" width="24" height="1" fill="#b9b9b9"/><rect x="24" y="445" width="611" height="1" fill="#d4d4d4"/><rect x="-1" y="445" width="24" height="1" fill="#b9b9b9"/><rect x="24" y="465" width="611" height="1" fill="#d4d4d4"/><rect x="-1" y="465" width="24" height="1" fill="#b9b9b9"/><rect x="24" y="485" width="611" height="1" fill="#d4d4d4"/><rect x="-1" y="485" width="24" height="1" fill="#b9b9b9"/><rect x="24" y="505" width="611" height="1" fill="#d4d4d4"/><rect x="-1" y="505" width="24" height="1" fill="#b9b9b9"/><rect x="24" y="525" width="611" height="1" fill="#d4d4d4"/><rect x="-1" y="525" width="24" height="1" fill="#b9b9b9"/><rect x="24" y="545" width="611" height="1" fill="#d4d4d4"/><rect x="-1" y="545" width="24" height="1" fill="#b9b9b9"/><rect x="-1" y="225" width="612" height="1" fill="#9e9e9e"/><rect x="23" y="206" width="1" height="343" fill="#9e9e9e"/><rect x="343" y="224" width="129" height="2" fill="#217346"/><text x="55.5" y="219.8" font-family="'Liberation Sans', sans-serif" font-size="12.8" font-weight="400" fill="#262626" textLength="7.68" lengthAdjust="spacingAndGlyphs" text-anchor="middle" >A</text><text x="119.5" y="219.8" font-family="'Liberation Sans', sans-serif" font-size="12.8" font-weight="400" fill="#262626" textLength="7.68" lengthAdjust="spacingAndGlyphs" text-anchor="middle" >B</text><text x="183.5" y="219.8" font-family="'Liberation Sans', sans-serif" font-size="12.8" font-weight="400" fill="#262626" textLength="8.32" lengthAdjust="spacingAndGlyphs" text-anchor="middle" >C</text><text x="247.5" y="219.8" font-family="'Liberation Sans', sans-serif" font-size="12.8" font-weight="400" fill="#262626" textLength="8.32" lengthAdjust="spacingAndGlyphs" text-anchor="middle" >D</text><text x="311.5" y="219.8" font-family="'Liberation Sans', sans-serif" font-size="12.8" font-weight="400" fill="#262626" textLength="7.68" lengthAdjust="spacingAndGlyphs" text-anchor="middle" >E</text><text x="407.5" y="219.8" font-family="'Liberation Sans', sans-serif" font-size="12.8" font-weight="400" fill="#217346" textLength="7.04" lengthAdjust="spacingAndGlyphs" text-anchor="middle" >F</text><text x="503.5" y="219.8" font-family="'Liberation Sans', sans-serif" font-size="12.8" font-weight="400" fill="#262626" textLength="8.96" lengthAdjust="spacingAndGlyphs" text-anchor="middle" >G</text><text x="567.5" y="219.8" font-family="'Liberation Sans', sans-serif" font-size="12.8" font-weight="400" fill="#262626" textLength="8.32" lengthAdjust="spacingAndGlyphs" text-anchor="middle" >H</text><text x="631.5" y="219.8" font-family="'Liberation Sans', sans-serif" font-size="12.8" font-weight="400" fill="#262626" textLength="3.2" lengthAdjust="spacingAndGlyphs" text-anchor="middle" >I</text><rect x="-1" y="326" width="24" height="19" fill="#d2d2d2"/><rect x="22" y="325" width="2" height="21" fill="#217346"/><text x="11.5" y="240.7" font-family="'Liberation Sans', sans-serif" font-size="12.8" font-weight="400" fill="#262626" text-anchor="middle" >1</text><text x="11.5" y="260.7" font-family="'Liberation Sans', sans-serif" font-size="12.8" font-weight="400" fill="#262626" text-anchor="middle" >2</text><text x="11.5" y="280.7" font-family="'Liberation Sans', sans-serif" font-size="12.8" font-weight="400" fill="#262626" text-anchor="middle" >3</text><text x="11.5" y="300.7" font-family="'Liberation Sans', sans-serif" font-size="12.8" font-weight="400" fill="#262626" text-anchor="middle" >4</text><text x="11.5" y="320.7" font-family="'Liberation Sans', sans-serif" font-size="12.8" font-weight="400" fill="#262626" text-anchor="middle" >5</text><text x="11.5" y="340.7" font-family="'Liberation Sans', sans-serif" font-size="12.8" font-weight="400" fill="#217346" text-anchor="middle" >6</text><text x="11.5" y="360.7" font-family="'Liberation Sans', sans-serif" font-size="12.8" font-weight="400" fill="#262626" text-anchor="middle" >7</text><text x="11.5" y="380.7" font-family="'Liberation Sans', sans-serif" font-size="12.8" font-weight="400" fill="#262626" text-anchor="middle" >8</text><text x="11.5" y="400.7" font-family="'Liberation Sans', sans-serif" font-size="12.8" font-weight="400" fill="#262626" text-anchor="middle" >9</text><text x="11.5" y="420.7" font-family="'Liberation Sans', sans-serif" font-size="12.8" font-weight="400" fill="#262626" text-anchor="middle" >10</text><text x="11.5" y="440.7" font-family="'Liberation Sans', sans-serif" font-size="12.8" font-weight="400" fill="#262626" text-anchor="middle" >11</text><text x="11.5" y="460.7" font-family="'Liberation Sans', sans-serif" font-size="12.8" font-weight="400" fill="#262626" text-anchor="middle" >12</text><text x="11.5" y="480.7" font-family="'Liberation Sans', sans-serif" font-size="12.8" font-weight="400" fill="#262626" text-anchor="middle" >13</text><text x="11.5" y="500.7" font-family="'Liberation Sans', sans-serif" font-size="12.8" font-weight="400" fill="#262626" text-anchor="middle" >14</text><text x="11.5" y="520.7" font-family="'Liberation Sans', sans-serif" font-size="12.8" font-weight="400" fill="#262626" text-anchor="middle" >15</text><text x="11.5" y="540.7" font-family="'Liberation Sans', sans-serif" font-size="12.8" font-weight="400" fill="#262626" text-anchor="middle" >16</text><rect x="153" y="306" width="61" height="178" fill="#e8edf7"/><rect x="153" y="325" width="61" height="1" fill="#c9ccd3"/><rect x="153" y="345" width="61" height="1" fill="#c9ccd3"/><rect x="153" y="365" width="61" height="1" fill="#c9ccd3"/><rect x="153" y="385" width="61" height="1" fill="#c9ccd3"/><rect x="153" y="405" width="61" height="1" fill="#c9ccd3"/><rect x="153" y="425" width="61" height="1" fill="#c9ccd3"/><rect x="153" y="445" width="61" height="1" fill="#c9ccd3"/><rect x="153" y="465" width="61" height="1" fill="#c9ccd3"/><text x="90.7" y="300.8" font-family="'Liberation Sans', sans-serif" font-size="13.3" font-weight="700" fill="#000" textLength="36" lengthAdjust="spacingAndGlyphs" >Week</text><text x="154.5" y="300.8" font-family="'Liberation Sans', sans-serif" font-size="13.3" font-weight="700" fill="#000" textLength="45.5" lengthAdjust="spacingAndGlyphs" >$ Spent</text><text x="148.5" y="320.5" font-family="'Liberation Sans', sans-serif" font-size="13.3" font-weight="400" fill="#000" text-anchor="end" >1</text><text x="212.5" y="320.5" font-family="'Liberation Sans', sans-serif" font-size="13.3" font-weight="400" fill="#000" textLength="15" lengthAdjust="spacingAndGlyphs" text-anchor="end" >32</text><text x="148.5" y="340.5" font-family="'Liberation Sans', sans-serif" font-size="13.3" font-weight="400" fill="#000" text-anchor="end" >2</text><text x="212.5" y="340.5" font-family="'Liberation Sans', sans-serif" font-size="13.3" font-weight="400" fill="#000" textLength="15" lengthAdjust="spacingAndGlyphs" text-anchor="end" >18</text><text x="148.5" y="360.5" font-family="'Liberation Sans', sans-serif" font-size="13.3" font-weight="400" fill="#000" text-anchor="end" >3</text><text x="212.5" y="360.5" font-family="'Liberation Sans', sans-serif" font-size="13.3" font-weight="400" fill="#000" textLength="15" lengthAdjust="spacingAndGlyphs" text-anchor="end" >26</text><text x="148.5" y="380.5" font-family="'Liberation Sans', sans-serif" font-size="13.3" font-weight="400" fill="#000" text-anchor="end" >4</text><text x="212.5" y="380.5" font-family="'Liberation Sans', sans-serif" font-size="13.3" font-weight="400" fill="#000" textLength="15" lengthAdjust="spacingAndGlyphs" text-anchor="end" >30</text><text x="148.5" y="400.5" font-family="'Liberation Sans', sans-serif" font-size="13.3" font-weight="400" fill="#000" text-anchor="end" >5</text><text x="212.5" y="400.5" font-family="'Liberation Sans', sans-serif" font-size="13.3" font-weight="400" fill="#000" textLength="15" lengthAdjust="spacingAndGlyphs" text-anchor="end" >31</text><text x="148.5" y="420.5" font-family="'Liberation Sans', sans-serif" font-size="13.3" font-weight="400" fill="#000" text-anchor="end" >6</text><text x="212.5" y="420.5" font-family="'Liberation Sans', sans-serif" font-size="13.3" font-weight="400" fill="#000" textLength="15" lengthAdjust="spacingAndGlyphs" text-anchor="end" >29</text><text x="148.5" y="440.5" font-family="'Liberation Sans', sans-serif" font-size="13.3" font-weight="400" fill="#000" text-anchor="end" >7</text><text x="212.5" y="440.5" font-family="'Liberation Sans', sans-serif" font-size="13.3" font-weight="400" fill="#000" textLength="15" lengthAdjust="spacingAndGlyphs" text-anchor="end" >22</text><text x="148.5" y="460.5" font-family="'Liberation Sans', sans-serif" font-size="13.3" font-weight="400" fill="#000" text-anchor="end" >8</text><text x="212.5" y="460.5" font-family="'Liberation Sans', sans-serif" font-size="13.3" font-weight="400" fill="#000" textLength="15" lengthAdjust="spacingAndGlyphs" text-anchor="end" >25</text><text x="148.5" y="480.5" font-family="'Liberation Sans', sans-serif" font-size="13.3" font-weight="400" fill="#000" text-anchor="end" >9</text><text x="212.5" y="480.5" font-family="'Liberation Sans', sans-serif" font-size="13.3" font-weight="400" fill="#000" textLength="15" lengthAdjust="spacingAndGlyphs" text-anchor="end" >32</text><text x="148.5" y="500.5" font-family="'Liberation Sans', sans-serif" font-size="13.3" font-weight="400" fill="#000" text-anchor="end" >10</text><text x="212.5" y="500.5" font-family="'Liberation Sans', sans-serif" font-size="13.3" font-weight="400" fill="#000" textLength="15" lengthAdjust="spacingAndGlyphs" text-anchor="end" >51</text><rect x="150.5" y="304.5" width="66" height="182" fill="none" stroke="#3f6fce" stroke-width="1"/><rect x="152" y="306" width="63" height="179" fill="none" stroke="#1d6b3c" stroke-width="2" stroke-dasharray="6.5,2"/><rect x="149" y="303" width="5" height="5" fill="#3f6fce"/><rect x="149" y="483" width="5" height="5" fill="#3f6fce"/><rect x="213" y="303" width="5" height="5" fill="#3f6fce"/><rect x="213" y="483" width="5" height="5" fill="#3f6fce"/><text x="347.2" y="320.6" font-family="'Liberation Serif', serif" font-size="14" font-weight="700" fill="#000" textLength="110" lengthAdjust="spacingAndGlyphs" >Average $ Spent</text><rect x="343" y="325" width="129" height="21" fill="#fff" stroke="#217346" stroke-width="2"/><rect x="469" y="343" width="5" height="5" fill="#217346"/><rect x="470" y="341" width="3" height="2" fill="#fff"/><text x="346.9" y="340.5" font-family="'Liberation Serif', serif" font-size="14" font-weight="400" fill="#000" textLength="76" lengthAdjust="spacingAndGlyphs" >=AVERAGE(</text><text x="423.6" y="340.5" font-family="'Liberation Sans', sans-serif" font-size="13.5" font-weight="400" fill="#4472c4" textLength="44" lengthAdjust="spacingAndGlyphs" >C5:C13</text><rect x="354.5" y="348.5" width="198" height="16" fill="#fff" stroke="#c8c8c8" stroke-width="1" filter="url(#tipsh)"/><text x="360.4" y="359.8" font-family="'Liberation Sans', sans-serif" font-size="11.3" fill="#6a6a6a" textLength="185" lengthAdjust="spacingAndGlyphs">AVERAGE(<tspan font-weight="700" fill="#505050">number1</tspan>, [number2], ...)</text><rect x="221.5" y="491.5" width="41" height="18" fill="#fff" stroke="#c4c4c4" stroke-width="1" filter="url(#tipsh)"/><text x="222.3" y="504.3" font-family="'Liberation Sans', sans-serif" font-size="12" font-weight="400" fill="#555" textLength="37.3" lengthAdjust="spacingAndGlyphs" >9R x 1C</text></g></g><rect x="553" y="0" width="45" height="1" fill="#217346"/><path d="M162.5,363.4 H185.5 V402.6 H196.3 L174,442 L151.8,402.6 H162.5 Z" fill="none" stroke="#e81c24" stroke-width="4.8" stroke-linejoin="round"/><path d="M514.6,439.5 H569.5 V420 L624.3,458 L569.5,496.4 V477 H514.6 Z" fill="none" stroke="#e81c24" stroke-width="4.6" stroke-linejoin="round"/><ellipse cx="410" cy="334.8" rx="79.5" ry="38.4" fill="none" stroke="#e81c24" stroke-width="4.8" transform="rotate(-1.3 410 334.8)"/><ellipse cx="980.1" cy="337.6" rx="112.7" ry="41" fill="none" stroke="#e81c24" stroke-width="4.8" transform="rotate(-0.65 980.1 337.6)"/></svg></body></html>
